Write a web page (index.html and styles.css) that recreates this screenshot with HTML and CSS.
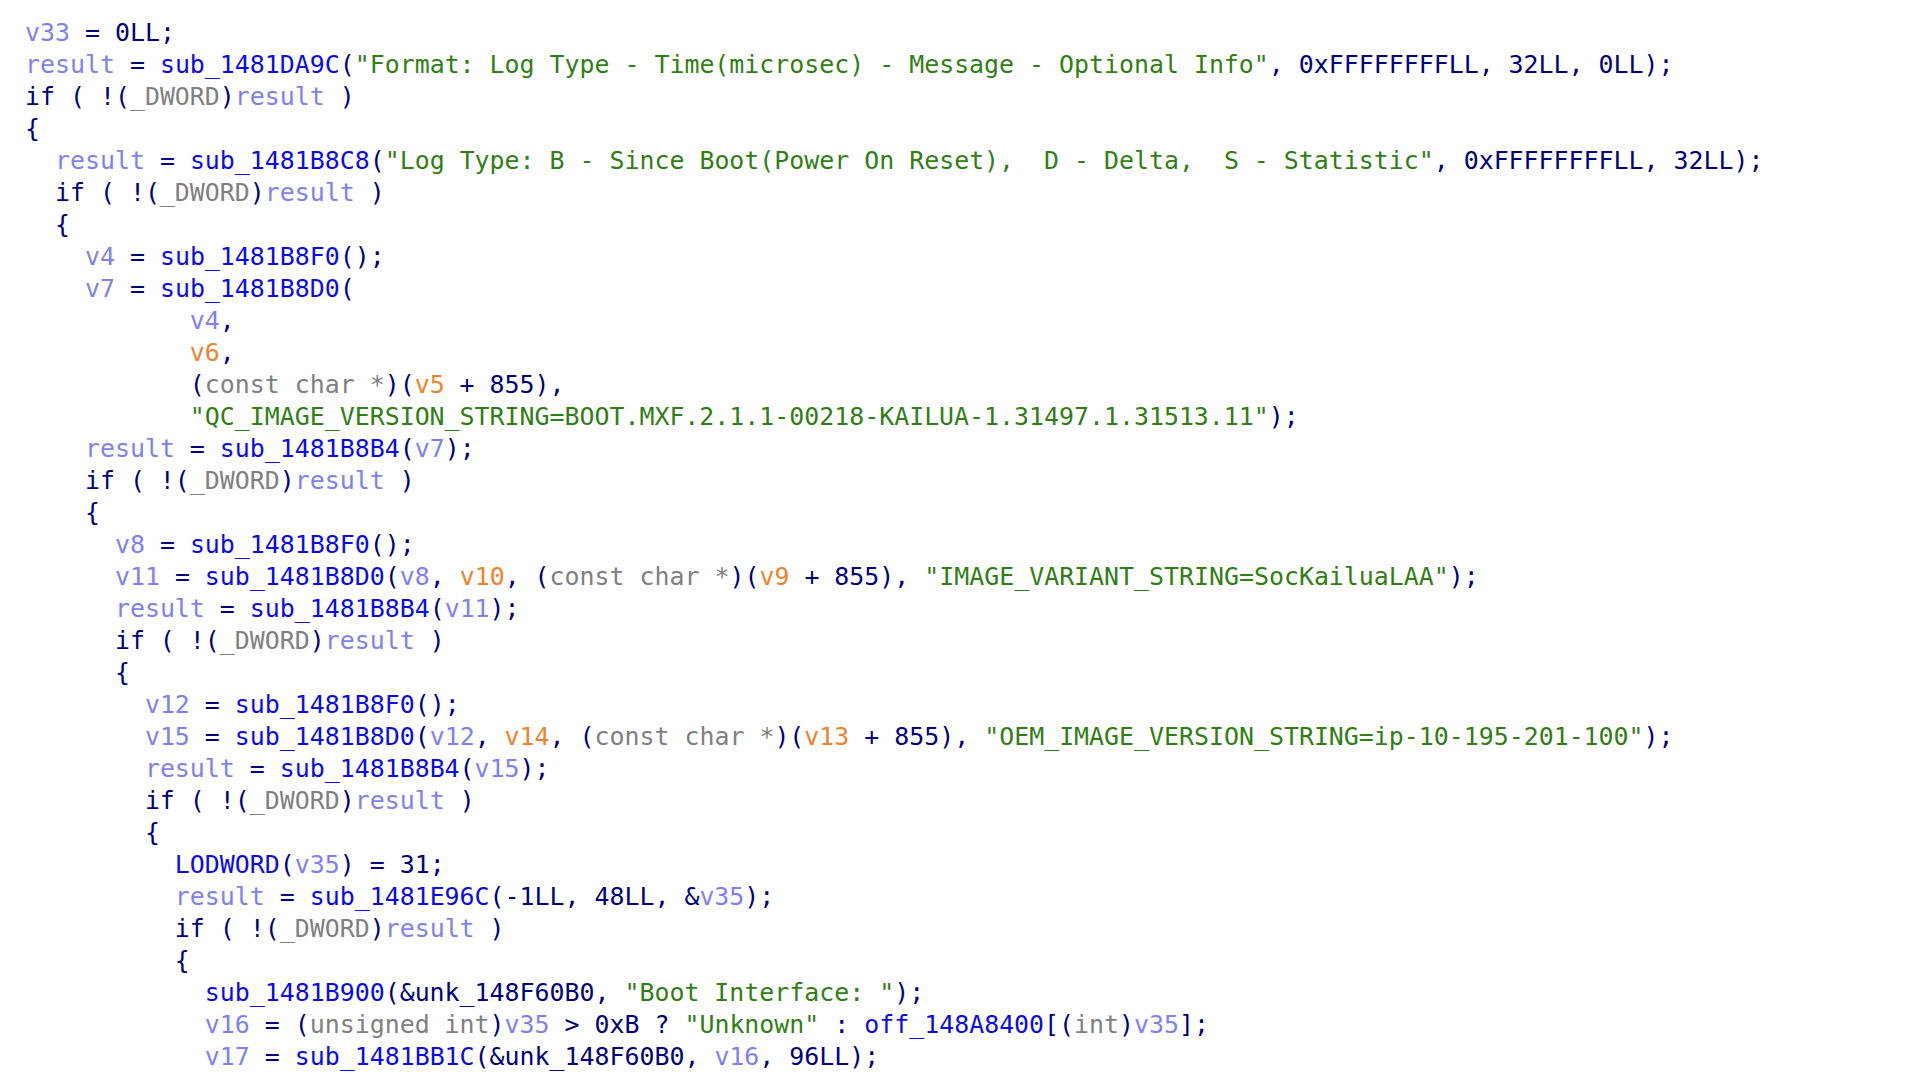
FILE: index.html
```html
<!DOCTYPE html>
<html>
<head>
<meta charset="utf-8">
<link rel="stylesheet" href="styles.css">
</head>
<body>
<pre class="code"><span class="v">v33</span> = 0LL;
<span class="v">result</span> = <span class="f">sub_1481DA9C</span>(<span class="s">"Format: Log Type - Time(microsec) - Message - Optional Info"</span>, 0xFFFFFFFFLL, 32LL, 0LL);
if ( !(<span class="t">_DWORD</span>)<span class="v">result</span> )
{
  <span class="v">result</span> = <span class="f">sub_1481B8C8</span>(<span class="s">"Log Type: B - Since Boot(Power On Reset),  D - Delta,  S - Statistic"</span>, 0xFFFFFFFFLL, 32LL);
  if ( !(<span class="t">_DWORD</span>)<span class="v">result</span> )
  {
    <span class="v">v4</span> = <span class="f">sub_1481B8F0</span>();
    <span class="v">v7</span> = <span class="f">sub_1481B8D0</span>(
           <span class="v">v4</span>,
           <span class="o">v6</span>,
           (<span class="t">const char *</span>)(<span class="o">v5</span> + 855),
           <span class="s">"QC_IMAGE_VERSION_STRING=BOOT.MXF.2.1.1-00218-KAILUA-1.31497.1.31513.11"</span>);
    <span class="v">result</span> = <span class="f">sub_1481B8B4</span>(<span class="v">v7</span>);
    if ( !(<span class="t">_DWORD</span>)<span class="v">result</span> )
    {
      <span class="v">v8</span> = <span class="f">sub_1481B8F0</span>();
      <span class="v">v11</span> = <span class="f">sub_1481B8D0</span>(<span class="v">v8</span>, <span class="o">v10</span>, (<span class="t">const char *</span>)(<span class="o">v9</span> + 855), <span class="s">"IMAGE_VARIANT_STRING=SocKailuaLAA"</span>);
      <span class="v">result</span> = <span class="f">sub_1481B8B4</span>(<span class="v">v11</span>);
      if ( !(<span class="t">_DWORD</span>)<span class="v">result</span> )
      {
        <span class="v">v12</span> = <span class="f">sub_1481B8F0</span>();
        <span class="v">v15</span> = <span class="f">sub_1481B8D0</span>(<span class="v">v12</span>, <span class="o">v14</span>, (<span class="t">const char *</span>)(<span class="o">v13</span> + 855), <span class="s">"OEM_IMAGE_VERSION_STRING=ip-10-195-201-100"</span>);
        <span class="v">result</span> = <span class="f">sub_1481B8B4</span>(<span class="v">v15</span>);
        if ( !(<span class="t">_DWORD</span>)<span class="v">result</span> )
        {
          <span class="f">LODWORD</span>(<span class="v">v35</span>) = 31;
          <span class="v">result</span> = <span class="f">sub_1481E96C</span>(-1LL, 48LL, &amp;<span class="v">v35</span>);
          if ( !(<span class="t">_DWORD</span>)<span class="v">result</span> )
          {
            <span class="f">sub_1481B900</span>(&amp;unk_148F60B0, <span class="s">"Boot Interface: "</span>);
            <span class="v">v16</span> = (<span class="t">unsigned int</span>)<span class="v">v35</span> &gt; 0xB ? <span class="s">"Unknown"</span> : <span class="f">off_148A8400</span>[(<span class="t">int</span>)<span class="v">v35</span>];
            <span class="v">v17</span> = <span class="f">sub_1481BB1C</span>(&amp;unk_148F60B0, <span class="v">v16</span>, 96LL);</pre>
</body>
</html>
```
FILE: styles.css
```css
html, body {
  margin: 0;
  padding: 0;
  background: #ffffff;
}

.code {
  margin: 0;
  padding: 17px 0 0 25px;
  font-family: "DejaVu Sans Mono", "Liberation Mono", monospace;
  font-size: 24.9px;
  line-height: 32px;
  color: #000080;
  white-space: pre;
}

.v { color: #7f7ff6; }
.f { color: #0a0aeb; }
.s { color: #2f7f15; }
.o { color: #f0832c; }
.t { color: #808080; }
```
